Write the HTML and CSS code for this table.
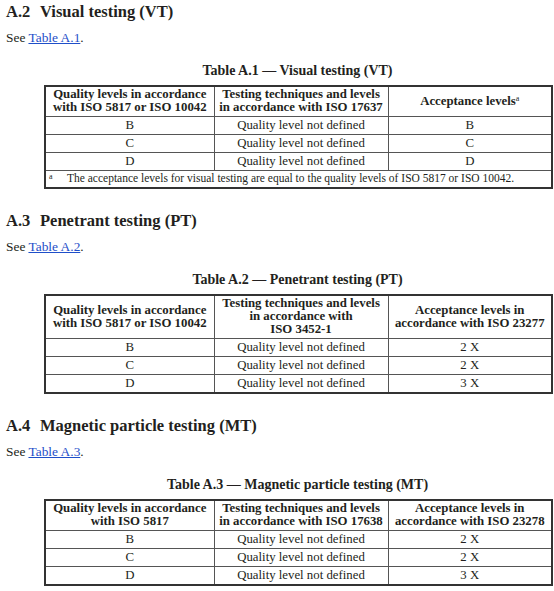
FILE: index.html
```html
<!DOCTYPE html>
<html lang="en">
<head>
    <meta charset="UTF-8">
    <title>Annex A — Testing methods</title>
    <link rel="stylesheet" href="styles.css">
</head>
<body>
    <section class="clause">
        <h2 class="clause-title"><span class="clause-num">A.2</span>Visual testing (VT)</h2>
        <p class="ref">See <a href="#table-a1">Table A.1</a>.</p>
        <p class="caption" id="table-a1">Table A.1 — Visual testing (VT)</p>
        <table class="req">
            <colgroup>
                <col class="c1"><col class="c2"><col class="c3">
            </colgroup>
            <thead>
                <tr>
                    <th>Quality levels in accordance<br>with ISO 5817 or ISO 10042</th>
                    <th>Testing techniques and levels<br>in accordance with ISO 17637</th>
                    <th>Acceptance levels<sup>a</sup></th>
                </tr>
            </thead>
            <tbody>
                <tr><td>B</td><td>Quality level not defined</td><td>B</td></tr>
                <tr><td>C</td><td>Quality level not defined</td><td>C</td></tr>
                <tr><td>D</td><td>Quality level not defined</td><td>D</td></tr>
                <tr>
                    <td colspan="3" class="note"><span class="note-mark">a</span>The acceptance levels for visual testing are equal to the quality levels of ISO 5817 or ISO 10042.</td>
                </tr>
            </tbody>
        </table>
    </section>

    <section class="clause">
        <h2 class="clause-title"><span class="clause-num">A.3</span>Penetrant testing (PT)</h2>
        <p class="ref">See <a href="#table-a2">Table A.2</a>.</p>
        <p class="caption" id="table-a2">Table A.2 — Penetrant testing (PT)</p>
        <table class="req">
            <colgroup>
                <col class="c1"><col class="c2"><col class="c3">
            </colgroup>
            <thead>
                <tr>
                    <th>Quality levels in accordance<br>with ISO 5817 or ISO 10042</th>
                    <th>Testing techniques and levels<br>in accordance with<br>ISO 3452-1</th>
                    <th>Acceptance levels in<br>accordance with ISO 23277</th>
                </tr>
            </thead>
            <tbody>
                <tr><td>B</td><td>Quality level not defined</td><td>2 X</td></tr>
                <tr><td>C</td><td>Quality level not defined</td><td>2 X</td></tr>
                <tr><td>D</td><td>Quality level not defined</td><td>3 X</td></tr>
            </tbody>
        </table>
    </section>

    <section class="clause">
        <h2 class="clause-title"><span class="clause-num">A.4</span>Magnetic particle testing (MT)</h2>
        <p class="ref">See <a href="#table-a3">Table A.3</a>.</p>
        <p class="caption" id="table-a3">Table A.3 — Magnetic particle testing (MT)</p>
        <table class="req">
            <colgroup>
                <col class="c1"><col class="c2"><col class="c3">
            </colgroup>
            <thead>
                <tr>
                    <th>Quality levels in accordance<br>with ISO 5817</th>
                    <th>Testing techniques and levels<br>in accordance with ISO 17638</th>
                    <th>Acceptance levels in<br>accordance with ISO 23278</th>
                </tr>
            </thead>
            <tbody>
                <tr><td>B</td><td>Quality level not defined</td><td>2 X</td></tr>
                <tr><td>C</td><td>Quality level not defined</td><td>2 X</td></tr>
                <tr><td>D</td><td>Quality level not defined</td><td>3 X</td></tr>
            </tbody>
        </table>
    </section>
</body>
</html>
```

FILE: styles.css
```css
body {
    font-family: 'Liberation Serif', 'DejaVu Serif', serif;
    color: #231f20;
    background: #fff;
    margin: 0;
    padding: 0 6px;
}

.clause {
    margin-top: 20px;
}

.clause:first-child {
    margin-top: 0;
}

.clause-title {
    font-size: 16.5px;
    line-height: 24px;
    font-weight: bold;
    margin: 0;
}

.clause-num {
    display: inline-block;
    width: 34px;
}

.ref {
    font-size: 13.4px;
    line-height: 16px;
    margin: 6px 0 0;
}

.ref a {
    color: #1f4fc9;
    text-decoration: underline;
}

.caption {
    font-size: 14px;
    line-height: 16px;
    font-weight: bold;
    text-align: center;
    margin: 17px 0 6px 38px;
    width: 507px;
}

.req {
    margin-left: 38px;
    width: 507px;
    table-layout: fixed;
    border-collapse: collapse;
    border: 2px solid #333;
    font-size: 12.8px;
    line-height: 13px;
}

.c1 { width: 169px; }
.c2 { width: 174px; }
.c3 { width: 164px; }

.req th,
.req td {
    border: 1px solid #555;
    padding: 2px 3px;
    text-align: center;
    vertical-align: middle;
    white-space: nowrap;
}

.req th {
    font-weight: bold;
    padding: 1px 3px 2px;
}

.req th sup {
    font-size: 8px;
    font-weight: normal;
    line-height: 0;
    vertical-align: 4px;
}

.req .note {
    text-align: left;
    font-size: 11.5px;
    padding: 1px 3px 2px;
}

.note-mark {
    display: inline-block;
    width: 18px;
    font-size: 8px;
    vertical-align: 3px;
    line-height: 0;
}
```
